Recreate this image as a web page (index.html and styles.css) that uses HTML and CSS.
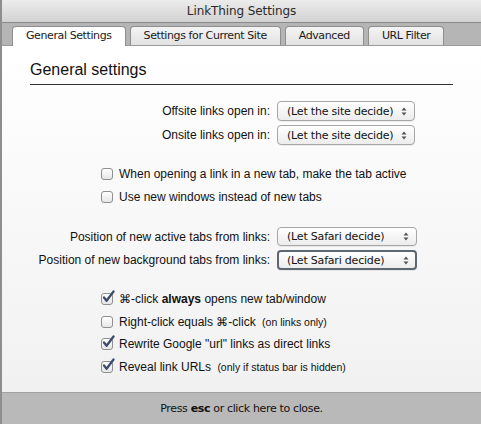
FILE: index.html
```html
<!DOCTYPE html>
<html>
<head>
<meta charset="utf-8">
<link rel="stylesheet" href="styles.css">
</head>
<body>
<div class="window">
  <div class="titlebar">LinkThing Settings</div>
  <div class="tabstrip">
    <div class="tab active">General Settings</div>
    <div class="tab">Settings for Current Site</div>
    <div class="tab">Advanced</div>
    <div class="tab">URL Filter</div>
  </div>
  <div class="content">
    <h1 class="heading">General settings</h1>

    <div class="selrows">
      <div class="selrow">
        <span class="label">Offsite links open in:</span>
        <div class="select site"><span>(Let the site decide)</span><svg class="arrows" width="6" height="9" viewBox="0 0 6 9"><path d="M0.5 3.5 L3 0.5 L5.5 3.5 Z M0.5 5.5 L3 8.5 L5.5 5.5 Z" fill="#555"/></svg></div>
      </div>
      <div class="selrow">
        <span class="label">Onsite links open in:</span>
        <div class="select site"><span>(Let the site decide)</span><svg class="arrows" width="6" height="9" viewBox="0 0 6 9"><path d="M0.5 3.5 L3 0.5 L5.5 3.5 Z M0.5 5.5 L3 8.5 L5.5 5.5 Z" fill="#555"/></svg></div>
      </div>
    </div>

    <div class="checks first">
      <div class="check"><span class="box"></span><span>When opening a link in a new tab, make the tab active</span></div>
      <div class="check"><span class="box"></span><span>Use new windows instead of new tabs</span></div>
    </div>

    <div class="selrows second">
      <div class="selrow">
        <span class="label">Position of new active tabs from links:</span>
        <div class="select safari"><span>(Let Safari decide)</span><svg class="arrows" width="6" height="9" viewBox="0 0 6 9"><path d="M0.5 3.5 L3 0.5 L5.5 3.5 Z M0.5 5.5 L3 8.5 L5.5 5.5 Z" fill="#555"/></svg></div>
      </div>
      <div class="selrow">
        <span class="label">Position of new background tabs from links:</span>
        <div class="select safari focused"><span>(Let Safari decide)</span><svg class="arrows" width="6" height="9" viewBox="0 0 6 9"><path d="M0.5 3.5 L3 0.5 L5.5 3.5 Z M0.5 5.5 L3 8.5 L5.5 5.5 Z" fill="#555"/></svg></div>
      </div>
    </div>

    <div class="checks last">
      <div class="check"><span class="box checked"><svg class="tick" width="14" height="14" viewBox="0 0 14 14"><path d="M3 7.5 L5.6 10.8 L12.5 1.5" fill="none" stroke="#3d4d6e" stroke-width="2.3" stroke-linecap="round" stroke-linejoin="round"/></svg></span><span>⌘-click <b>always</b> opens new tab/window</span></div>
      <div class="check"><span class="box"></span><span>Right-click equals ⌘-click <small class="note">(on links only)</small></span></div>
      <div class="check"><span class="box checked"><svg class="tick" width="14" height="14" viewBox="0 0 14 14"><path d="M3 7.5 L5.6 10.8 L12.5 1.5" fill="none" stroke="#3d4d6e" stroke-width="2.3" stroke-linecap="round" stroke-linejoin="round"/></svg></span><span>Rewrite Google "url" links as direct links</span></div>
      <div class="check"><span class="box checked"><svg class="tick" width="14" height="14" viewBox="0 0 14 14"><path d="M3 7.5 L5.6 10.8 L12.5 1.5" fill="none" stroke="#3d4d6e" stroke-width="2.3" stroke-linecap="round" stroke-linejoin="round"/></svg></span><span>Reveal link URLs <small class="note">(only if status bar is hidden)</small></span></div>
    </div>
  </div>
  <div class="footer">Press <b>esc</b> or click here to close.</div>
</div>
</body>
</html>
```

FILE: styles.css
```css
html, body {
  margin: 0;
  padding: 0;
  width: 481px;
  height: 424px;
  overflow: hidden;
  background: #b8b8b8;
}

.window {
  display: flex;
  flex-direction: column;
  width: 481px;
  height: 424px;
  box-sizing: border-box;
  border-left: 2px solid #8e8e8e;
  font-family: "Liberation Sans", Arial, sans-serif;
  color: #111;
}

.titlebar {
  height: 22px;
  line-height: 22px;
  text-align: center;
  font-family: "DejaVu Sans", sans-serif;
  font-size: 12px;
  letter-spacing: -0.1px;
  color: #2a2a2a;
  background: linear-gradient(#ececec, #d2d2d2);
  border-bottom: 1px solid #8a8a8a;
}

.tabstrip {
  height: 22px;
  display: flex;
  align-items: flex-end;
  gap: 4px;
  padding-left: 10px;
  background: #b5b5b5;
  border-bottom: 1px solid #9a9a9a;
  position: relative;
}

.tab {
  height: 18px;
  line-height: 18px;
  padding: 0 13px;
  font-family: "DejaVu Sans", sans-serif;
  font-size: 11px;
  letter-spacing: -0.4px;
  color: #1a1a1a;
  background: linear-gradient(#f4f4f4, #e2e2e2);
  border: 1px solid #8e8e8e;
  border-bottom: none;
  border-radius: 4px 4px 0 0;
}

.tab.active {
  background: #fff;
  height: 19px;
  margin-bottom: -1px;
  position: relative;
}

.content {
  flex: 1;
  background: linear-gradient(#ffffff, #f1f1f1);
  padding-top: 14px;
}

.heading {
  margin: 0 28px;
  font-size: 16px;
  font-weight: normal;
  line-height: 20px;
  padding-bottom: 4px;
  border-bottom: 1px solid #333;
  color: #111;
}

.selrows {
  margin-top: 16px;
  display: flex;
  flex-direction: column;
  gap: 4px;
}

.selrows.second {
  margin-top: 23px;
}

.selrow {
  display: grid;
  grid-template-columns: 268px auto;
  column-gap: 7px;
  align-items: center;
}

.label {
  text-align: right;
  font-size: 12px;
}

.select {
  height: 18px;
  box-sizing: border-box;
  display: flex;
  align-items: center;
  justify-content: space-between;
  padding: 0 7px 0 9px;
  border: 1px solid #a6a6a6;
  border-radius: 4px;
  background: linear-gradient(#ffffff, #ececec);
  font-family: "DejaVu Sans", sans-serif;
  font-size: 11px;
  letter-spacing: -0.2px;
  color: #111;
  box-shadow: 0 1px 0 rgba(0,0,0,0.06);
}

.select.site { width: 138px; height: 20px; }
.select.safari { width: 140px; height: 19px; }

.select.focused {
  border: 2px solid #5e6670;
  padding: 0 6px 0 8px;
  height: 20px;
}

.checks {
  margin-left: 99px;
  display: flex;
  flex-direction: column;
}

.checks.first {
  margin-top: 22px;
  gap: 9px;
}

.checks.last {
  margin-top: 22px;
  gap: 8.7px;
}

.check {
  display: flex;
  align-items: center;
  gap: 6px;
  font-size: 12px;
  height: 14px;
}

.box {
  width: 12px;
  height: 12px;
  box-sizing: border-box;
  border: 1px solid #8f8f8f;
  border-radius: 3px;
  background: linear-gradient(#ffffff, #e6e6e6);
  position: relative;
  flex: none;
}

.tick {
  position: absolute;
  left: -1px;
  top: -4px;
}

.note {
  font-size: 10.5px;
  margin-left: 3px;
}

.footer {
  height: 31px;
  line-height: 31px;
  text-align: center;
  background: #b9b9b9;
  border-top: 1px solid #a2a2a2;
  font-family: "DejaVu Sans", sans-serif;
  font-size: 11px;
  letter-spacing: -0.35px;
  color: #111;
}
```
